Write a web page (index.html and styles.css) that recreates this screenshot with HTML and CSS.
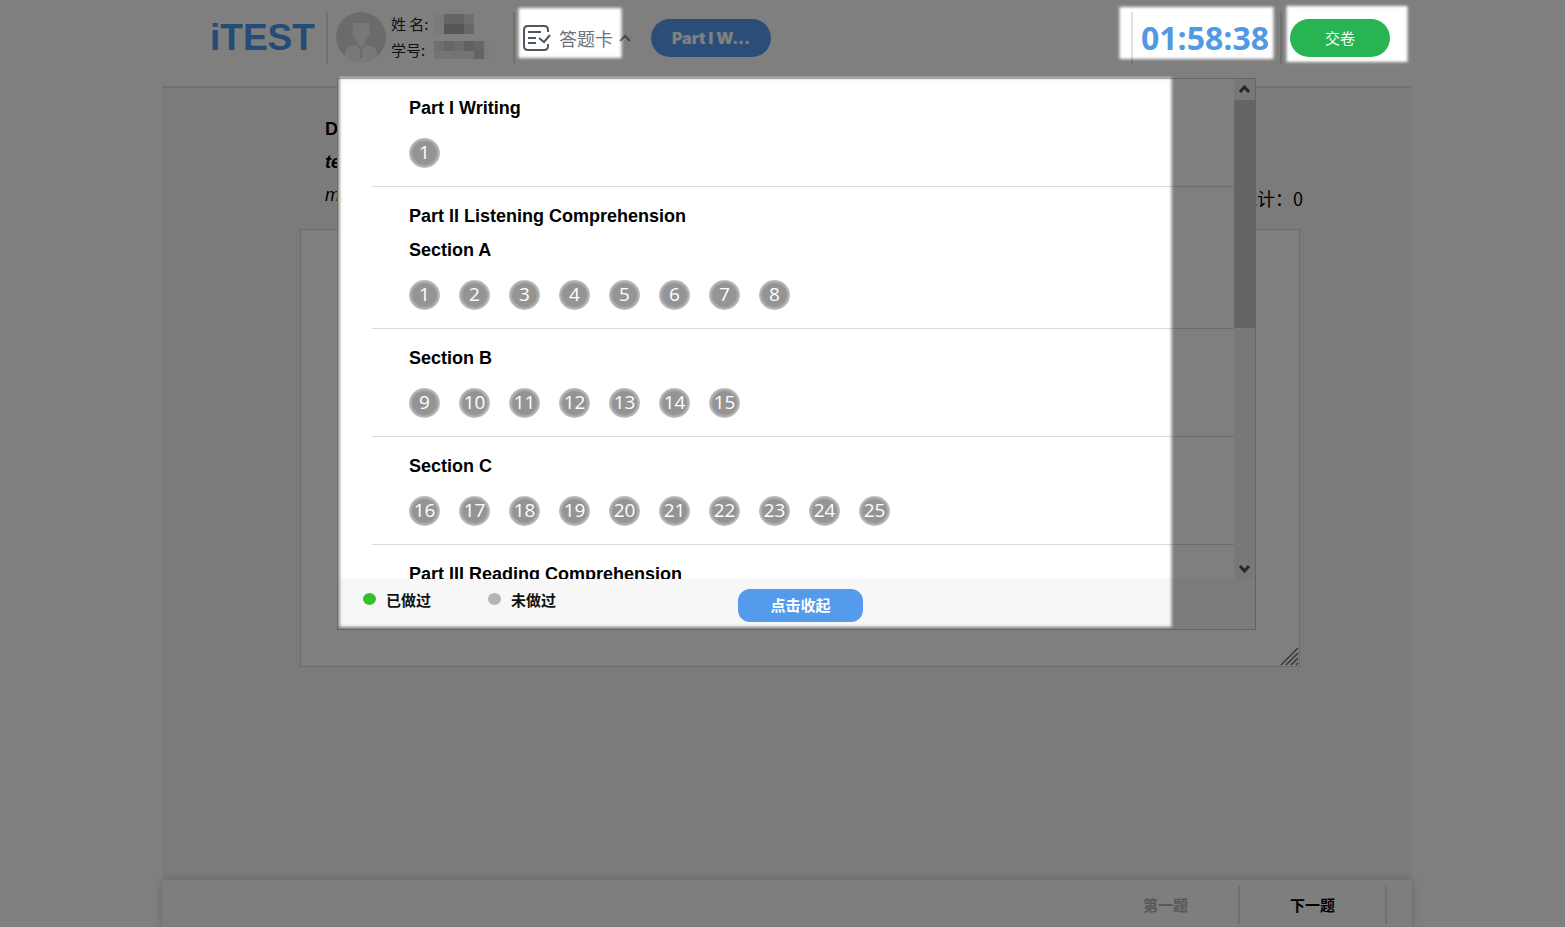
FILE: index.html
```html
<!DOCTYPE html>
<html lang="zh-CN">
<head>
<meta charset="UTF-8">
<meta name="viewport" content="width=device-width, initial-scale=1.0">
<title>iTEST</title>
<link rel="stylesheet" href="styles.css">
</head>
<body>

<div class="page">
    <header class="header">
        <div class="logo">iTEST</div>
        <span class="divider"></span>
        <svg class="avatar" viewBox="0 0 50 50">
            <circle cx="25" cy="25" r="25" fill="#d6d6d6"/>
            <path d="M18 11h16l-1 3v5c2 0 1 4-1 5-1 3-2 4-3 5v3l-4 3-4-3v-3c-2-1-3-3-3-5-2-1-3-5-1-5v-5z" fill="#f0f0f0"/>
            <path d="M9 45V41c0-5 5-7 11-8l4 5v8h2v-8l4-5c6 1 11 3 11 8v4a25 25 0 0 1-32 0z" fill="#f0f0f0"/>
        </svg>
        <div class="user">
            <div class="user-row">
                <span>姓 名:</span>
                <svg class="mosaic" width="50" height="20" shape-rendering="crispEdges">
                    <rect width="10" height="20" fill="#f5f5f5"/>
                    <rect x="10" width="20" height="10" fill="#cacaca"/>
                    <rect x="30" width="10" height="10" fill="#dedede"/>
                    <rect x="10" y="10" width="20" height="10" fill="#acacac"/>
                    <rect x="30" y="10" width="10" height="10" fill="#cccccc"/>
                </svg>
            </div>
            <div class="user-row">
                <span>学号:</span>
                <svg class="mosaic" width="55" height="18" shape-rendering="crispEdges">
                    <rect width="10" height="10" fill="#dedede"/>
                    <rect x="10" width="10" height="10" fill="#cccccc"/>
                    <rect x="20" width="10" height="10" fill="#d8d8d8"/>
                    <rect x="30" width="10" height="10" fill="#c0c0c0"/>
                    <rect x="40" width="10" height="10" fill="#cccccc"/>
                    <rect y="10" width="40" height="8" fill="#eaeaea"/>
                    <rect x="40" y="10" width="10" height="8" fill="#c6c6c6"/>
                    <rect x="50" width="5" height="18" fill="#f8f8f8"/>
                </svg>
            </div>
        </div>
        <span class="divider"></span>
        <button class="card-btn" type="button">
            <svg width="28" height="26" viewBox="0 0 28 26" fill="none" stroke="#4d5763" stroke-width="2">
                <path d="M25 7V5q0-4-4-4H5Q1 1 1 5v16q0 4 4 4h16q4 0 4-4v-2"/>
                <path d="M5 7h13M5 13h8M5 18h8M16 13l5 4 6-7"/>
            </svg>
            <span>答题卡</span>
            <svg class="caret" width="12" height="8" viewBox="0 0 12 8" fill="none" stroke="#888" stroke-width="2">
                <path d="M1 7l5-5 5 5"/>
            </svg>
        </button>
        <button class="part-btn" type="button">Part I W...</button>

        <div class="header-right">
            <span class="divider"></span>
            <div class="timer">01:58:38</div>
            <span class="divider"></span>
            <button class="submit-btn" type="button">交卷</button>
        </div>

        <div class="panel">
            <div class="panel-body">
                <div class="panel-list">
                    <div class="section">
                        <h3>Part I Writing</h3>
                        <div class="nums"><button>1</button></div>
                    </div>
                    <div class="section">
                        <h3>Part II Listening Comprehension</h3>
                        <h3>Section A</h3>
                        <div class="nums">
                            <button>1</button><button>2</button><button>3</button><button>4</button>
                            <button>5</button><button>6</button><button>7</button><button>8</button>
                        </div>
                    </div>
                    <div class="section">
                        <h3>Section B</h3>
                        <div class="nums">
                            <button>9</button><button>10</button><button>11</button><button>12</button>
                            <button>13</button><button>14</button><button>15</button>
                        </div>
                    </div>
                    <div class="section">
                        <h3>Section C</h3>
                        <div class="nums">
                            <button>16</button><button>17</button><button>18</button><button>19</button><button>20</button>
                            <button>21</button><button>22</button><button>23</button><button>24</button><button>25</button>
                        </div>
                    </div>
                    <div class="section">
                        <h3>Part III Reading Comprehension</h3>
                    </div>
                </div>
                <div class="scrollbar">
                    <svg class="arrow" viewBox="0 0 21 21" fill="none" stroke="#505050" stroke-width="3"><path d="M6 13l4.500-5 4.500 5"/></svg>
                    <div class="thumb"></div>
                    <svg class="arrow arrow-down" viewBox="0 0 21 21" fill="none" stroke="#505050" stroke-width="3"><path d="M6 8l4.500 5 4.500-5"/></svg>
                </div>
            </div>
            <div class="panel-foot">
                <span class="legend"><i class="dot done"></i>已做过</span>
                <span class="legend"><i class="dot"></i>未做过</span>
                <button class="close-btn" type="button">点击收起</button>
            </div>
        </div>
    </header>

    <main class="main">
        <div class="intro">
            <div class="directions">
                <b>D</b><br>
                <b><i>te</i></b><br>
                <i>m</i>
            </div>
            <label class="count" for="answer">字数统计：0</label>
        </div>
        <div class="answer-box">
            <textarea class="answer" id="answer"></textarea>
            <svg class="grip" width="19" height="19" viewBox="0 0 19 19" stroke="#707070" stroke-width="1.500">
                <path d="M1 18L18 1M6 18L18 6M11 18l7-7M16 18l2-2"/>
            </svg>
        </div>
    </main>

    <footer class="footer">
        <button class="nav-btn" type="button" disabled>第一题</button>
        <span class="divider"></span>
        <button class="nav-btn" type="button">下一题</button>
        <span class="divider"></span>
    </footer>
</div>

<!-- dark layer with highlighted areas -->
<svg class="guide" width="100%" height="100%">
    <defs>
        <filter id="soft" filterUnits="userSpaceOnUse" x="-2000" y="-100" width="4000" height="2000">
            <feGaussianBlur stdDeviation="1.500"/>
        </filter>
        <mask id="holes" maskUnits="userSpaceOnUse" x="0" y="0" width="100%" height="100%">
            <rect width="100%" height="100%" fill="#fff"/>
            <svg x="50%" overflow="visible">
                <g filter="url(#soft)">
                    <rect x="-264" y="8" width="103" height="50"/>
                    <rect x="337" y="7" width="154" height="52"/>
                    <rect x="504" y="6" width="121" height="56"/>
                    <rect x="-443" y="78" width="832" height="549"/>
                </g>
            </svg>
        </mask>
    </defs>
    <rect width="100%" height="100%" fill="#000" fill-opacity="0.5" mask="url(#holes)"/>
</svg>

</body>
</html>
```
FILE: styles.css
```css
* {
    box-sizing: border-box;
}
body {
    margin: 0;
    padding-left: 9px;
    background-color: #fff;
    font-family: "Liberation Sans", "Noto Sans CJK SC", sans-serif;
    color: #000;
}
button {
    padding: 0 0 2px;
    border: none;
    background: none;
    font-family: "Noto Sans CJK SC", sans-serif;
    cursor: pointer;
}
.page {
    display: flex;
    flex-direction: column;
    max-width: 1250px;
    min-height: 100vh;
    margin: 0 auto;
}
.divider {
    flex: none;
    width: 2px;
    height: 52px;
    background-color: #e0e0e0;
}

/* header */
.header {
    position: relative;
    z-index: 10;
    display: flex;
    align-items: center;
    height: 88px;
    padding: 0 22px 10px 48px;
    border-bottom: 2px solid #e0e0e0;
}
.logo {
    width: 116px;
    font-size: 37px;
    font-weight: bold;
    color: #4a96ee;
}
.avatar {
    width: 50px;
    height: 50px;
    margin: 0 0 2px 8px;
}
.user {
    width: 127px;
    padding: 0 0 2px 5px;
    font-family: "Noto Sans CJK SC", sans-serif;
    font-size: 15px;
    color: #222;
}
.user-row {
    display: flex;
    align-items: center;
    height: 26px;
    line-height: 26px;
}
.user-row span {
    width: 43px;
    white-space: nowrap;
}
.card-btn {
    display: flex;
    align-items: center;
    gap: 8px;
    margin-left: 8px;
    padding: 0;
    font-size: 18px;
    line-height: 26px;
    color: #6b747e;
}
.caret {
    margin-left: -2px;
}
.part-btn {
    width: 120px;
    height: 38px;
    margin-left: 20px;
    padding: 0;
    border-radius: 19px;
    background-color: #549cee;
    font-family: Inter, sans-serif;
    font-size: 16px;
    font-weight: 900;
    color: #fff;
}
.header-right {
    display: flex;
    align-items: center;
    gap: 8px;
    margin-left: auto;
}
.timer {
    width: 131px;
    font-family: "Open Sans", sans-serif;
    font-size: 32px;
    font-weight: bold;
    line-height: 52px;
    color: #5299e4;
}
.submit-btn {
    width: 100px;
    height: 38px;
    border-radius: 19px;
    background-color: #29b453;
    font-size: 15px;
    color: #fff;
}

/* answer card panel */
.panel {
    position: absolute;
    top: 78px;
    left: 175px;
    right: 156px;
    border: 1px solid #c8c8c8;
    background-color: #fff;
}
.panel-body {
    display: flex;
    height: 500px;
    overflow: hidden;
}
.panel-list {
    flex: 1;
    padding-left: 34px;
}
.section {
    padding: 12px 0 18px 37px;
    border-bottom: 1px solid #dadada;
}
.section h3 {
    margin: 0;
    font-size: 18px;
    line-height: 34px;
}
.nums {
    display: flex;
    gap: 19px;
    margin-top: 13px;
}
.nums button {
    width: 31px;
    height: 30px;
    border-radius: 50%;
    background: radial-gradient(closest-side, #949494 74%, #c4c4c4 100%);
    font-family: "Open Sans", sans-serif;
    font-size: 19px;
    line-height: 28px;
    color: #fff;
}
.scrollbar {
    display: flex;
    flex-direction: column;
    width: 21px;
    background-color: #f1f1f1;
}
.arrow {
    width: 21px;
    height: 21px;
}
.arrow-down {
    margin-top: auto;
}
.thumb {
    height: 228px;
    background-color: #cacaca;
}
.panel-foot {
    display: flex;
    height: 50px;
    padding: 10px 0 0 25px;
    background-color: #f7f7f7;
}
.legend {
    display: flex;
    align-items: center;
    width: 125px;
    height: 20px;
    font-family: "Noto Sans CJK SC", sans-serif;
    font-size: 15px;
    font-weight: bold;
    color: #111;
}
.dot {
    width: 13px;
    height: 12px;
    margin-right: 10px;
    border-radius: 50%;
    background-color: #b5b5b5;
}
.dot.done {
    background-color: #33c22e;
}
.close-btn {
    width: 125px;
    height: 33px;
    margin-left: 125px;
    border-radius: 12px;
    background-color: #549bec;
    font-size: 15px;
    font-weight: bold;
    color: #fff;
}

/* question */
.main {
    flex: 1;
    padding: 25px 112px 0 138px;
    background-color: #f7f7f7;
}
.intro {
    display: flex;
    justify-content: space-between;
    align-items: flex-end;
    height: 116px;
    padding-left: 25px;
}
.directions {
    align-self: flex-start;
    font-size: 18px;
    line-height: 33px;
}
.count {
    margin-right: -3px;
    padding-bottom: 18px;
    font-family: "Noto Sans CJK SC", sans-serif;
    font-size: 18px;
    line-height: 26px;
}
.answer-box {
    position: relative;
}
.answer {
    display: block;
    width: 100%;
    height: 438px;
    border: 1px solid #d8d8d8;
    background-color: #fff;
    resize: none;
}
.grip {
    position: absolute;
    right: 1px;
    bottom: 1px;
}

/* bottom bar */
.footer {
    display: flex;
    justify-content: flex-end;
    height: 47px;
    padding: 6px 25px 0 0;
    background-color: #fcfcfc;
    box-shadow: 0 0 8px rgba(0, 0, 0, 0.2);
}
.footer .divider {
    height: 38px;
}
.nav-btn {
    width: 145px;
    height: 38px;
    font-size: 15px;
    font-weight: bold;
    color: #000;
}
.nav-btn:disabled {
    color: #b0b0b0;
}

.guide {
    position: fixed;
    top: 0;
    left: 0;
    z-index: 100;
    pointer-events: none;
}
```
